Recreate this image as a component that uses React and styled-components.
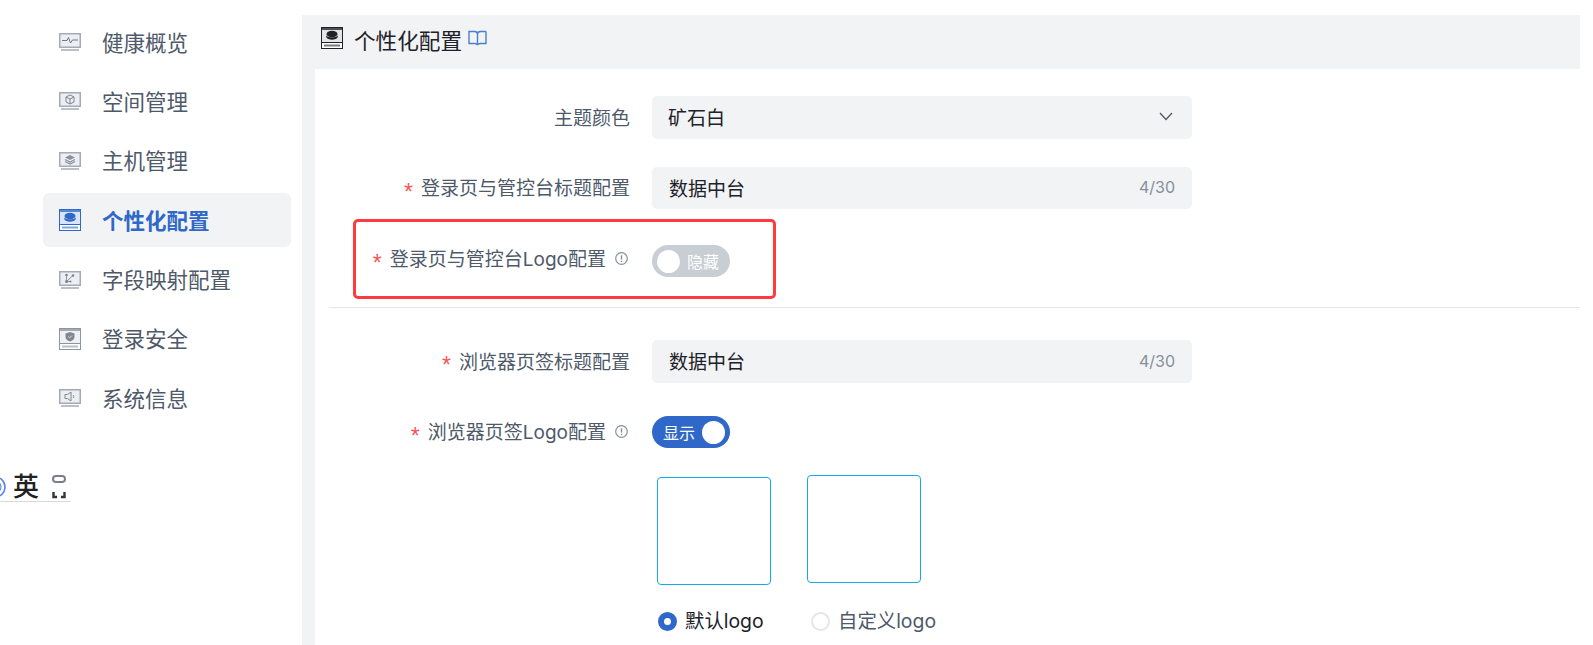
import React from 'react';
import styled, { createGlobalStyle } from 'styled-components';

const GlobalStyle = createGlobalStyle`
  html, body {
    margin: 0;
    padding: 0;
    background: #fff;
    font-family: Inter, "Noto Sans CJK SC", "Noto Sans", sans-serif;
  }
  * { box-sizing: border-box; }
`;

const Page = styled.div`
  display: flex;
  width: 1593px;
  height: 645px;
  overflow: hidden;
`;

const Sidebar = styled.aside`
  width: 302px;
  flex-shrink: 0;
  padding: 15px 11px 0 43px;
`;

const Menu = styled.nav`
  display: flex;
  flex-direction: column;
  gap: 5.4px;
`;

const MenuItem = styled.div`
  height: 54px;
  display: flex;
  align-items: center;
  gap: 21px;
  padding-left: 16px;
  border-radius: 6px;
  font-size: 21.5px;
  font-weight: ${(p) => (p.$active ? 700 : 400)};
  color: ${(p) => (p.$active ? '#2f68c8' : '#4e5969')};
  background: ${(p) => (p.$active ? '#f2f3f5' : 'transparent')};
`;

const MenuText = styled.span`
  margin-bottom: 2px;
`;

const IconSlot = styled.span`
  width: 22px;
  height: 22px;
  display: flex;
  align-items: center;
  justify-content: center;
  flex-shrink: 0;
`;

const LangBar = styled.div`
  display: flex;
  align-items: center;
  width: 71px;
  height: 29px;
  margin: 48px 0 0 -43px;
  border-bottom: 1px solid #d9d9d9;
`;

const LangGlyph = styled.span`
  font-size: 26px;
  line-height: 26px;
  font-weight: 500;
  color: #222;
  margin: 0 0 0 7px;
`;

const Main = styled.main`
  width: 1278px;
  margin-top: 15px;
  padding-left: 13px;
  background: linear-gradient(#f2f3f5, #f2f3f5) no-repeat left top / 13px 100%;
`;

const PageHeader = styled.header`
  height: 54px;
  margin-left: -13px;
  padding: 0 0 6px 19px;
  display: flex;
  align-items: center;
  background: #f2f3f5;
  font-size: 21.6px;
  color: #1d2129;
`;

const HeaderIcon = styled.span`
  display: flex;
  margin-bottom: 3px;
`;

const HeaderTitle = styled.span`
  margin-left: 11px;
`;

const BookLink = styled.span`
  display: flex;
  margin: 0 0 2px 6px;
  color: #4a7fd0;
`;

const Form = styled.section`
  padding-top: 27px;
  background: #fff;
`;

const Row = styled.div`
  position: relative;
  display: grid;
  grid-template-columns: 315px 1fr;
  column-gap: 22px;
  align-items: center;
  margin-bottom: ${(p) => p.$mb || 0}px;
`;

const Label = styled.label`
  display: flex;
  align-items: center;
  justify-content: flex-end;
  margin: ${(p) => (p.$raised ? '0 0 2px' : '2px 0 0')};
  font-size: 19px;
  line-height: 28px;
  color: #4e5969;
  white-space: nowrap;
`;

const Star = styled.span`
  margin: 3px 8px -3px 0;
  color: #f7555a;
  font-family: "Liberation Sans", sans-serif;
  font-size: 23px;
  line-height: 23px;
`;

const Hint = styled.span`
  display: flex;
  margin: 0 2px 3px 9px;
  color: #86909c;
`;

const Field = styled.div`
  width: 540px;
  height: ${(p) => p.$h}px;
  display: flex;
  align-items: center;
  justify-content: space-between;
  padding: 0 ${(p) => p.$pr}px 2px ${(p) => p.$pl}px;
  background: #f2f3f5;
  border-radius: 5px;
  font-size: 19px;
  color: #1d2129;
`;

const Count = styled.span`
  font-size: 16px;
  color: #86909c;
`;

const Switch = styled.div`
  width: 78px;
  height: 32px;
  border-radius: 16px;
  display: flex;
  align-items: center;
  flex-direction: ${(p) => (p.$on ? 'row' : 'row-reverse')};
  justify-content: space-between;
  padding: 0 ${(p) => (p.$on ? 5 : 11)}px 0 ${(p) => (p.$on ? 11 : 5)}px;
  background: ${(p) => (p.$on ? '#2f68c8' : '#c9cdd4')};
  color: #fff;
  font-size: 16px;
`;

const SwitchText = styled.span`
  margin-bottom: 1px;
`;

const Knob = styled.span`
  width: 23px;
  height: 23px;
  border-radius: 50%;
  background: #fff;
`;

const Callout = styled.div`
  position: absolute;
  left: 38px;
  top: -26px;
  width: 423px;
  height: 80px;
  border: 3px solid #ff3b3f;
  border-radius: 5px;
  pointer-events: none;
`;

const Divider = styled.hr`
  margin: 30px 0 32px 14px;
  border: 0;
  border-top: 1px solid #e5e6eb;
`;

const LogoArea = styled.div`
  margin: 27px 0 0 337px;
`;

const LogoBoxes = styled.div`
  display: flex;
  align-items: flex-start;
  gap: 36px;
  padding-left: 5px;
`;

const LogoBox = styled.div`
  width: 114px;
  height: 108px;
  margin-top: ${(p) => p.$mt || 0}px;
  border: 1px solid #12a9ee;
  border-radius: 4px;
`;

const Radios = styled.div`
  display: flex;
  margin-top: 24px;
  padding-left: 6px;
`;

const RadioItem = styled.div`
  width: 153px;
  display: flex;
  align-items: center;
  gap: 8px;
  font-size: 19.4px;
  line-height: 24px;
  color: ${(p) => (p.$checked ? '#1d2129' : '#4e5969')};
`;

const RadioText = styled.span`
  margin-bottom: 2px;
`;

const RadioDot = styled.span`
  width: 19px;
  height: 19px;
  margin-bottom: 1px;
  border-radius: 50%;
  background: #fff;
  border: ${(p) => (p.$checked ? '6px solid #2f68c8' : '2px solid #e5e6eb')};
`;

const Frame = ({ children, solid, color = '#a4abb6', inner = '#eceef1' }) => (
  <svg width="22" height={solid ? 22 : 18} viewBox={solid ? '0 0 22 22' : '0 0 22 18'} fill="none">
    {solid ? (
      <>
        <rect x="0.5" y="0.5" width="21" height="21" fill="#fff" stroke={color} />
        <rect x="1" y="1" width="20" height="2" fill={color} opacity="0.8" />
        <rect x="1" y="3" width="20" height="12" fill={inner} />
        <path d="M1 15.5H21" stroke={color} />
        <rect x="3" y="17.5" width="16" height="2" fill={color} opacity="0.6" />
      </>
    ) : (
      <>
        <rect x="0.75" y="0.75" width="20.5" height="13.5" fill={inner} stroke={color} strokeWidth="1.5" />
        <path d="M2 17H20" stroke={color} strokeWidth="1.5" />
      </>
    )}
    {children}
  </svg>
);

const Disc = ({ color }) => (
  <>
    <ellipse cx="11" cy="7" rx="5.5" ry="3.2" fill={color} />
    <path d="M5.2 8.2C6 11 16 11 16.8 8.2V10C15.5 13.6 6.5 13.6 5.2 10Z" fill={color} />
  </>
);

const icons = {
  health: <Frame><path d="M3 7.5H8L9.5 4.5L11.5 10L13.5 7H19" stroke="#6f7885" strokeWidth="1" /></Frame>,
  space: <Frame><path d="M11 3L15 5V10L11 12L7 10V5ZM7 5L11 7L15 5M11 7V12" stroke="#7d8591" strokeWidth="1" /></Frame>,
  host: <Frame><path d="M11 3L16 5.5L11 8L6 5.5Z" fill="#8a929e" /><path d="M6 7.5L11 10L16 7.5M6 9.5L11 12L16 9.5" stroke="#8a929e" strokeWidth="1.2" /></Frame>,
  custom: <Frame solid color="#2f68c8" inner="#d9e4f6"><Disc color="#2f68c8" /></Frame>,
  mapping: (
    <Frame>
      <path d="M7.5 4V10.5L14 4.5M7.5 10.5H11" stroke="#8a929e" strokeWidth="1" />
      <circle cx="7.5" cy="4" r="1.3" fill="#7d8591" />
      <circle cx="7.5" cy="10.5" r="1.5" fill="#7d8591" />
      <circle cx="14" cy="4.5" r="1.3" fill="#7d8591" />
      <circle cx="11.5" cy="10.5" r="1" fill="#7d8591" />
    </Frame>
  ),
  security: (
    <Frame solid color="#8d95a1" inner="#eef0f2">
      <path d="M11 4L15.5 5.5V9C15.5 11 13.5 12.6 11 13.5C8.5 12.6 6.5 11 6.5 9V5.5Z" fill="#7f8794" />
      <path d="M9.2 8.5L10.6 9.9L12.9 7.6" stroke="#dfe2e6" />
    </Frame>
  ),
  system: <Frame><path d="M6 5.5H8.5L12 3V12L8.5 9.5H6ZM14 6C15 7 15 8 14 9" stroke="#7d8591" strokeWidth="1" /></Frame>,
};

const menu = [
  { key: 'health', text: '健康概览' },
  { key: 'space', text: '空间管理' },
  { key: 'host', text: '主机管理' },
  { key: 'custom', text: '个性化配置', active: true },
  { key: 'mapping', text: '字段映射配置' },
  { key: 'security', text: '登录安全' },
  { key: 'system', text: '系统信息' },
];

const InfoIcon = () => (
  <svg width="13" height="13" viewBox="0 0 13 13" fill="none">
    <circle cx="6.5" cy="6.5" r="5.8" stroke="currentColor" strokeWidth="1.2" />
    <path d="M6.5 3.2V7.4M6.5 8.7V9.9" stroke="currentColor" strokeWidth="1.4" />
  </svg>
);

const BookIcon = () => (
  <svg width="19" height="17" viewBox="0 0 19 17" fill="none" stroke="currentColor" strokeWidth="1.4">
    <path d="M1 1.5H6.5C8 1.5 9.5 2.5 9.5 4V15C9 14 7.5 13.5 6.5 13.5H1ZM18 1.5H12.5C11 1.5 9.5 2.5 9.5 4M18 1.5V13.5H12.5C11.5 13.5 10 14 9.5 15" />
  </svg>
);

const Chevron = () => (
  <svg width="14" height="9" viewBox="0 0 14 9" fill="none" stroke="#4e5969" strokeWidth="1.3">
    <path d="M1 1L7 7.5L13 1" />
  </svg>
);

const App = () => (
  <>
    <GlobalStyle />
    <Page>
      <Sidebar>
        <Menu>
          {menu.map((item) => (
            <MenuItem key={item.key} $active={item.active}>
              <IconSlot>{icons[item.key]}</IconSlot>
              <MenuText>{item.text}</MenuText>
            </MenuItem>
          ))}
        </Menu>
        <LangBar>
          <svg width="6" height="26" viewBox="0 0 6 26" fill="none">
            <circle cx="-5" cy="13" r="10" stroke="#5b86e6" strokeWidth="1.6" />
            <circle cx="-5" cy="13" r="6" stroke="#5b86e6" strokeWidth="1.2" />
          </svg>
          <LangGlyph>英</LangGlyph>
          <svg width="14" height="24" viewBox="0 0 14 24" fill="none" style={{ marginLeft: 13 }}>
            <rect x="1" y="1" width="12" height="6" rx="3" stroke="#7a7f8c" strokeWidth="2" />
            <path d="M1.5 17V22H5M12.5 17V22H9" stroke="#333" strokeWidth="2.4" />
          </svg>
        </LangBar>
      </Sidebar>
      <Main>
        <PageHeader>
          <HeaderIcon>
            <Frame solid color="#1f2329" inner="#e3e5e8"><Disc color="#1f2329" /></Frame>
          </HeaderIcon>
          <HeaderTitle>个性化配置</HeaderTitle>
          <BookLink><BookIcon /></BookLink>
        </PageHeader>
        <Form>
          <Row $mb={28}>
            <Label>主题颜色</Label>
            <Field $h={43} $pl={16} $pr={19}>矿石白<Chevron /></Field>
          </Row>
          <Row $mb={36}>
            <Label><Star>*</Star>登录页与管控台标题配置</Label>
            <Field $h={42} $pl={17} $pr={17}>数据中台<Count>4/30</Count></Field>
          </Row>
          <Row>
            <Label $raised>
              <Star>*</Star>登录页与管控台Logo配置
              <Hint><InfoIcon /></Hint>
            </Label>
            <Switch><SwitchText>隐藏</SwitchText><Knob /></Switch>
            <Callout />
          </Row>
          <Divider />
          <Row $mb={33}>
            <Label><Star>*</Star>浏览器页签标题配置</Label>
            <Field $h={43} $pl={17} $pr={17}>数据中台<Count>4/30</Count></Field>
          </Row>
          <Row>
            <Label>
              <Star>*</Star>浏览器页签Logo配置
              <Hint><InfoIcon /></Hint>
            </Label>
            <Switch $on><SwitchText>显示</SwitchText><Knob /></Switch>
          </Row>
          <LogoArea>
            <LogoBoxes>
              <LogoBox $mt={2} />
              <LogoBox />
            </LogoBoxes>
            <Radios>
              <RadioItem $checked><RadioDot $checked /><RadioText>默认logo</RadioText></RadioItem>
              <RadioItem><RadioDot /><RadioText>自定义logo</RadioText></RadioItem>
            </Radios>
          </LogoArea>
        </Form>
      </Main>
    </Page>
  </>
);

export default App;
